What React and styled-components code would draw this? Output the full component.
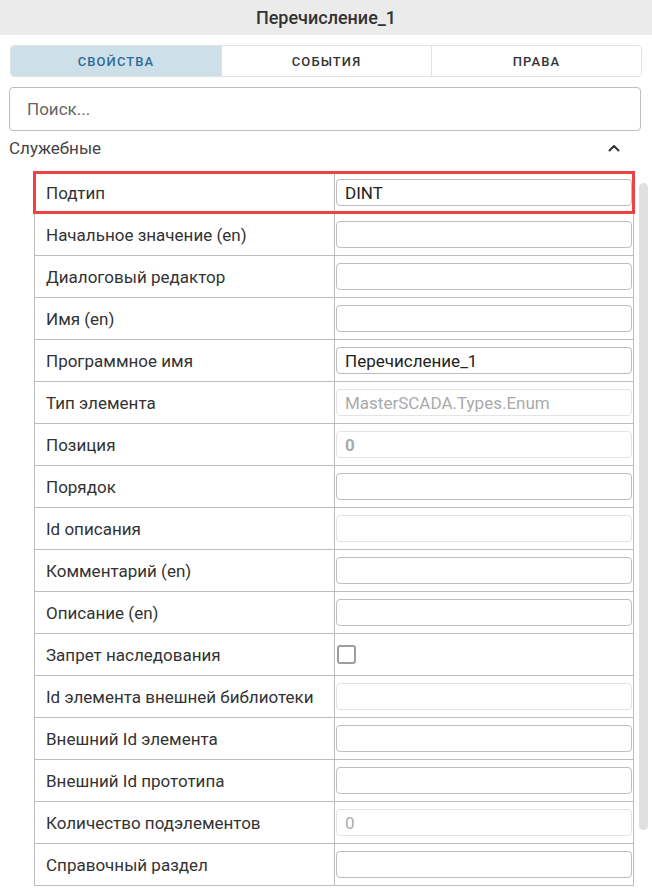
import styled, { createGlobalStyle } from "styled-components";

const GlobalStyle = createGlobalStyle`
  html, body {
    margin: 0;
    padding: 0;
    background: #fff;
  }
  body {
    font-family: Roboto, "Noto Sans", "Liberation Sans", sans-serif;
    color: #333;
  }
  * {
    box-sizing: border-box;
  }
`;

const Panel = styled.div`
  width: 652px;
  height: 891px;
  overflow: hidden;
  background: #fff;
  display: flex;
  flex-direction: column;
`;

const Header = styled.div`
  height: 35px;
  flex-shrink: 0;
  background: #ebebeb;
  display: flex;
  align-items: center;
  justify-content: center;
  font-size: 18px;
  font-weight: 500;
  color: #333;
`;

const Body = styled.div`
  padding: 0 10px;
  display: flex;
  flex-direction: column;
`;

const Tabs = styled.div`
  margin-top: 10px;
  height: 32px;
  display: grid;
  grid-template-columns: repeat(3, 1fr);
  border: 1px solid #e2e2e2;
  border-radius: 4px;
  overflow: hidden;
`;

const Tab = styled.div`
  display: flex;
  align-items: center;
  justify-content: center;
  font-size: 13px;
  font-weight: 500;
  letter-spacing: 1.1px;
  text-transform: uppercase;
  background: ${(p) => (p.$active ? "#cde0ea" : "#fff")};
  color: ${(p) => (p.$active ? "#2f6b97" : "#333")};
  & + & {
    border-left: 1px solid #e2e2e2;
  }
`;

const Search = styled.input`
  margin-top: 10px;
  margin-left: -1px;
  height: 44px;
  width: 632px;
  border: 1px solid #bdbdbd;
  border-radius: 4px;
  padding: 0 17px;
  font-family: inherit;
  font-size: 17px;
  color: #333;
  outline: none;

  &::placeholder {
    color: #666;
  }
`;

const Section = styled.div`
  height: 34px;
  display: flex;
  align-items: center;
  justify-content: space-between;
  margin-left: -1px;
  padding-right: 22px;
  font-size: 17px;
  color: #444;
`;

const Content = styled.div`
  margin-top: 6px;
  padding-left: 34px;
  display: flex;
  align-items: flex-start;
  gap: 5px;
`;

const Table = styled.div`
  width: 600px;
  border-left: 1px solid #bdbdbd;
  border-right: 1px solid #bdbdbd;
  border-top: 1px solid #bdbdbd;
`;

const Row = styled.div`
  position: relative;
  height: 42px;
  display: grid;
  grid-template-columns: 300px 1fr;
  border-bottom: 1px solid #bdbdbd;

  ${(p) =>
    p.$selected &&
    `
    &::after {
      content: "";
      position: absolute;
      left: -2px;
      right: -2px;
      top: -1px;
      bottom: -1px;
      border: 3px solid #ef4343;
      pointer-events: none;
    }
  `}
`;

const Label = styled.div`
  display: flex;
  align-items: center;
  padding-left: 11px;
  font-size: 17px;
  color: #333;
  white-space: nowrap;
  border-right: 1px solid #bdbdbd;
`;

const Cell = styled.div`
  display: flex;
  align-items: center;
  padding: 0 1px 0 1px;
`;

const Field = styled.div`
  width: 100%;
  height: 27px;
  border: 1px solid ${(p) => (p.$disabled ? "#e4e4e4" : "#bdbdbd")};
  border-radius: 4px;
  padding: 0 8px;
  display: flex;
  align-items: center;
  font-size: 17px;
  font-weight: ${(p) => (p.$bold ? 700 : 400)};
  color: ${(p) => (p.$disabled ? "#aaa" : "#222")};
  white-space: nowrap;
  overflow: hidden;
`;

const Check = styled.div`
  width: 19px;
  height: 19px;
  margin-left: 1px;
  border: 2px solid #9e9e9e;
  border-radius: 3px;
  background: #fff;
`;

const Scrollbar = styled.div`
  margin-top: 12px;
  width: 9px;
  height: 647px;
  border-radius: 5px;
  background: #e0e0e0;
`;

const Chevron = () => (
  <svg width="12" height="8" viewBox="0 0 12 8">
    <polyline
      points="1.5,6.5 6,2 10.5,6.5"
      fill="none"
      stroke="#333"
      strokeWidth="2"
      strokeLinecap="round"
      strokeLinejoin="round"
    />
  </svg>
);

const rows = [
  { label: "Подтип", value: "DINT", selected: true },
  { label: "Начальное значение (en)" },
  { label: "Диалоговый редактор" },
  { label: "Имя (en)" },
  { label: "Программное имя", value: "Перечисление_1" },
  { label: "Тип элемента", value: "MasterSCADA.Types.Enum", disabled: true },
  { label: "Позиция", value: "0", disabled: true, bold: true },
  { label: "Порядок" },
  { label: "Id описания", disabled: true },
  { label: "Комментарий (en)" },
  { label: "Описание (en)" },
  { label: "Запрет наследования", checkbox: true },
  { label: "Id элемента внешней библиотеки", disabled: true },
  { label: "Внешний Id элемента" },
  { label: "Внешний Id прототипа" },
  { label: "Количество подэлементов", value: "0", disabled: true },
  { label: "Справочный раздел" },
];

export default function App() {
  return (
    <>
      <GlobalStyle />
      <Panel>
        <Header>Перечисление_1</Header>
        <Body>
          <Tabs>
            <Tab $active>Свойства</Tab>
            <Tab>События</Tab>
            <Tab>Права</Tab>
          </Tabs>
          <Search placeholder="Поиск..." />
          <Section>
            <span>Служебные</span>
            <Chevron />
          </Section>
        </Body>
        <Content>
          <Table>
            {rows.map((r) => (
              <Row key={r.label} $selected={r.selected}>
                <Label>{r.label}</Label>
                <Cell>
                  {r.checkbox ? (
                    <Check />
                  ) : (
                    <Field $disabled={r.disabled} $bold={r.bold}>
                      {r.value}
                    </Field>
                  )}
                </Cell>
              </Row>
            ))}
          </Table>
          <Scrollbar />
        </Content>
      </Panel>
    </>
  );
}
